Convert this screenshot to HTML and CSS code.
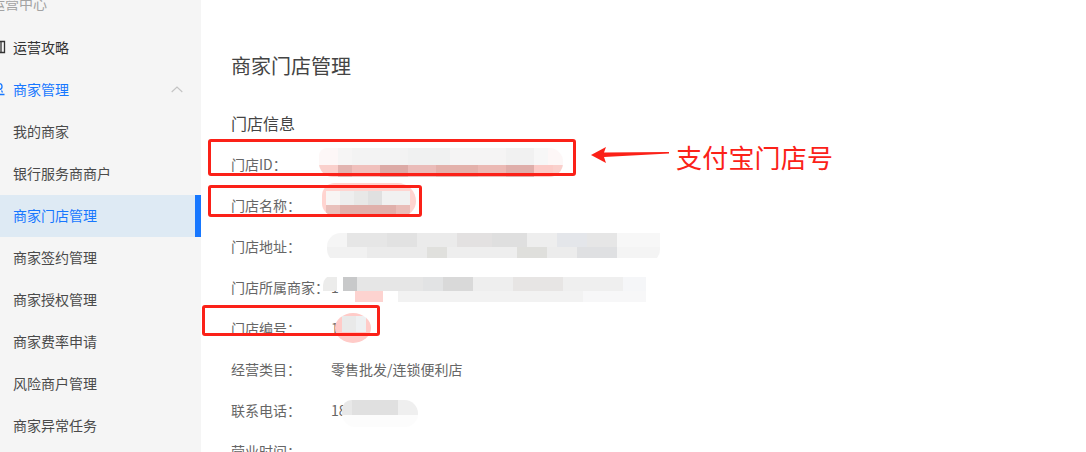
FILE: index.html
```html
<!DOCTYPE html>
<html lang="zh-CN">
<head>
<meta charset="utf-8">
<title>商家门店管理</title>
<link rel="stylesheet" href="styles.css">
</head>
<body>
<div class="shell">
  <aside class="sidebar">
    <div class="nav-group">运营中心</div>
    <div class="nav-item nav-top">
      <svg class="nav-icon" viewBox="0 0 14 14" fill="none" stroke="#333" stroke-width="1.3"><path d="M2 1.500h10.500v11H2zM9 1.500v11"/></svg>
      <span>运营攻略</span>
    </div>
    <div class="nav-item nav-top nav-open">
      <svg class="nav-icon" viewBox="0 0 14 14" fill="none" stroke="#1677ff" stroke-width="1.3"><circle cx="7" cy="4.500" r="3"/><path d="M4.500 7.500 1.500 12.500h11M9.500 8.500l1 2"/></svg>
      <span>商家管理</span>
      <svg class="chevron" viewBox="0 0 12 7" fill="none" stroke="#c4c4c4" stroke-width="1.100"><path d="M.7 6 6 1l5.300 5"/></svg>
    </div>
    <div class="nav-item nav-sub">我的商家</div>
    <div class="nav-item nav-sub">银行服务商商户</div>
    <div class="nav-item nav-sub nav-active">商家门店管理</div>
    <div class="nav-item nav-sub">商家签约管理</div>
    <div class="nav-item nav-sub">商家授权管理</div>
    <div class="nav-item nav-sub">商家费率申请</div>
    <div class="nav-item nav-sub">风险商户管理</div>
    <div class="nav-item nav-sub">商家异常任务</div>
  </aside>
  <main class="content">
    <h1 class="page-title">商家门店管理</h1>
    <h2 class="section-title">门店信息</h2>
    <dl class="details">
      <div class="row"><dt>门店ID：</dt><dd></dd></div>
      <div class="row"><dt>门店名称：</dt><dd></dd></div>
      <div class="row"><dt>门店地址：</dt><dd></dd></div>
      <div class="row"><dt>门店所属商家：</dt><dd>1</dd></div>
      <div class="row"><dt>门店编号：</dt><dd>1</dd></div>
      <div class="row"><dt>经营类目：</dt><dd>零售批发/连锁便利店</dd></div>
      <div class="row"><dt>联系电话：</dt><dd>18</dd></div>
      <div class="row"><dt>营业时间：</dt><dd></dd></div>
    </dl>
  </main>
  <div class="mask mask-id"></div>
  <div class="mask mask-name"></div>
  <div class="mask mask-address"></div>
  <div class="mask mask-merchant"></div>
  <div class="mask mask-number"></div>
  <div class="mask mask-phone"></div>
  <div class="callout callout-id"></div>
  <div class="callout callout-name"></div>
  <div class="callout callout-number"></div>
  <svg class="arrow" viewBox="0 0 80 18"><path d="M0 9 15 1 13 6.500 78 6v1.500L13 11l2 6z" fill="#fb2118"/></svg>
  <div class="note">支付宝门店号</div>
</div>
</body>
</html>
```
FILE: styles.css
```css
* { box-sizing: border-box; }
html, body { margin: 0; padding: 0; background: #fff; }
body { font-family: "Noto Sans CJK SC", "Liberation Sans", sans-serif; }

.shell {
  position: relative;
  display: flex;
  width: 1086px;
  height: 452px;
  overflow: hidden;
}

/* Sidebar */
.sidebar {
  flex: 0 0 201px;
  height: 467px;
  margin-top: -15px;
  background: #f5f5f5;
  font-size: 14px;
  color: #333;
}
.nav-group {
  height: 42px;
  line-height: 36px;
  margin-left: -9px;
  color: #a3a3a3;
}
.nav-item {
  display: flex;
  align-items: center;
  height: 42px;
  padding: 0 0 2px 13px;
}
.nav-top { padding-left: 0; }
.nav-icon {
  flex: none;
  width: 14px;
  height: 14px;
  margin-left: -8px;
  margin-right: 7px;
}
.nav-open { color: #1677ff; }
.chevron {
  width: 12px;
  height: 7px;
  margin-left: 102px;
}
.nav-sub { color: #4a4a4a; }
.nav-active {
  color: #1677ff;
  background: #deeaf4;
  border-right: 6px solid #1677ff;
}

/* Content */
.content {
  flex: 1;
  padding: 52px 0 0 30px;
  color: #666;
  font-size: 14px;
}
.page-title {
  margin: 0 0 31px;
  font-size: 20px;
  font-weight: 400;
  line-height: 28px;
  color: #444;
}
.section-title {
  margin: 0 0 10px;
  font-size: 16px;
  font-weight: 400;
  line-height: 24px;
  color: #444;
}
.details { margin: 0; }
.row {
  display: flex;
  height: 41px;
  line-height: 39px;
}
.row dt { width: 100px; flex: none; white-space: nowrap; }
.row dd { margin: 0; }

/* Blurred-out regions */
.mask { position: absolute; background-repeat: no-repeat; }
.mask-id {
  left: 319px; top: 148px; width: 244px; height: 29px;
  border-radius: 8px 14px 14px 14px;
  background-image:
    linear-gradient(90deg, #e2b4b0 0 14px, #f0c0bc 14px 42px, #dcaaa6 42px 70px, #eabcb9 70px 98px, #e3b1ab 98px 140px, #ebb9b4 140px 168px, #dfaeaa 168px 196px, #fbcbc7 196px),
    linear-gradient(90deg, #f6f5f5 0 14px, #f3f3f3 14px 70px, #f0f1f1 70px 112px, #f5f4f4 112px 168px, #f1f1f1 168px 196px, #f7f7f7 196px 210px, transparent 210px),
    linear-gradient(#fdf7f7 0 17px, #fad0cc 17px);
  background-size: 215px 12px, 229px 17px, 100% 100%;
  background-position: 19px 17px, 19px 0, 0 0;
}
.mask-name {
  left: 322px; top: 183px; width: 94px; height: 33px;
  border-radius: 14px 20px 16px 14px;
  background-image:
    linear-gradient(90deg, #f8f5f4 0 14px, #eeeeee 14px 28px, #e8e8e7 28px 42px, #e0e0e0 42px 56px, #f1f1f1 56px 84px, transparent 84px),
    linear-gradient(90deg, #e9c0bb 0 14px, #e0b0ab 14px 70px, #e9bdb8 70px 84px, transparent 84px),
    linear-gradient(#ffd4d0 0 100%);
  background-size: 100% 14px, 100% 10px, 100% 100%;
  background-position: 4px 8px, 4px 22px, 0 0;
}
.mask-address {
  left: 327px; top: 233px; width: 333px; height: 30px;
  border-radius: 14px 0 14px 14px;
  background-image:
    linear-gradient(90deg, #f5f5f5 0 20px, #e6e6e6 20px 60px, #e2e2e2 60px 90px, #ebebeb 90px 130px, #e3e1e1 130px 165px, #dfdfdf 165px 200px, #eeeeee 200px 230px, #e4e6ea 230px 260px, #e6e6e6 260px 290px, #f7f7f7 290px),
    linear-gradient(90deg, #f1f1f1 0 40px, #ebebeb 40px 100px, #e0e0dd 100px 120px, #eeeeee 120px 190px, #dfdfdc 190px 220px, #ececec 220px 250px, #dfe0e2 250px 290px, #f4f4f4 290px),
    linear-gradient(#fff 0 100%);
  background-size: 100% 14px, 100% 11px;
  background-position: 0 0, 0 14px, 0 0;
}
.mask-merchant {
  left: 323px; top: 275px; width: 323px; height: 27px;
  border-radius: 10px 0 0 12px;
  background-image:
    linear-gradient(90deg, #ececeb 0 14px, #fff 14px 20px, #c8c9ca 20px 34px, #e6e6e6 34px 100px, #e2e3e4 100px 120px, #d9d9d9 120px 150px, #eeeeee 150px 190px, #e7e5e4 190px 240px, #efefef 240px 300px, #f5f6f8 300px),
    linear-gradient(90deg, transparent 0 32px, #fdd3d0 32px 60px, transparent 60px 75px, #f2f2f2 75px 260px, #f7f7f8 260px),
    linear-gradient(#fff 0 100%);
  background-size: 100% 14px, 100% 12px;
  background-position: 0 2px, 0 15px, 0 0;
}
.mask-number {
  left: 335px; top: 313px; width: 36px; height: 30px;
  border-radius: 50%;
  background-image:
    linear-gradient(90deg, #e9e9e9 0 14px, #eef0f2 14px 100%),
    linear-gradient(#ffcbc8 0 100%);
  background-size: 24px 16px, 100% 100%;
  background-position: 7px 3px, 0 0;
}
.mask-phone {
  left: 342px; top: 400px; width: 76px; height: 27px;
  border-radius: 10px 14px 14px 14px;
  background-image:
    linear-gradient(90deg, #e8e8e8 0 10px, #e0e0e0 10px 56px, #efefef 56px),
    linear-gradient(#fcfcfc 0 100%);
  background-size: 100% 15px, 100% 100%;
  background-position: 0 0, 0 0;
}

/* Hand-drawn annotations */
.callout {
  position: absolute;
  border: 3px solid #fb2118;
  border-radius: 3px;
}
.callout-id { left: 208px; top: 139px; width: 368px; height: 37px; }
.callout-name { left: 208px; top: 185px; width: 214px; height: 32px; }
.callout-number { left: 202px; top: 305px; width: 178px; height: 31px; }
.arrow { position: absolute; left: 591px; top: 146px; width: 80px; height: 18px; }
.note {
  position: absolute;
  left: 676px;
  top: 139px;
  font-size: 26px;
  line-height: 36px;
  letter-spacing: .2px;
  color: #fb2118;
  white-space: nowrap;
}
```
